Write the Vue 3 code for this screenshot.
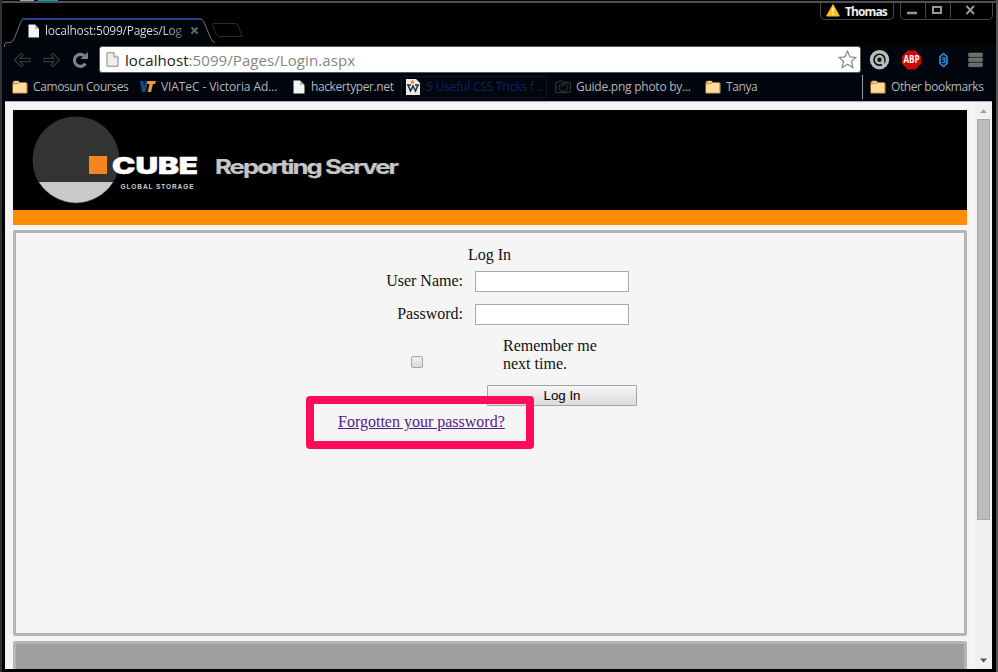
<script setup>
const bookmarks = [
  { label: 'Camosun Courses', icon: 'folder', cls: 'camosun' },
  { label: 'VIATeC - Victoria Ad...', icon: 'viatec', cls: 'viatec' },
  { label: 'hackertyper.net', icon: 'page', cls: 'hacker' },
  { label: '5 Useful CSS Tricks f...', icon: 'word', cls: 'tricks' },
  { label: 'Guide.png photo by...', icon: 'camera', cls: 'guide' },
  { label: 'Tanya', icon: 'folder', cls: 'tanya' },
  { label: 'Other bookmarks', icon: 'folder', cls: 'other' },
]
</script>

<template>
  <div class="window">
    <div class="edge-top"><i class="bit-a"></i><i class="bit-b"></i></div>
    <div class="titlebar">
      <div class="tab">
        <svg class="tab-shape" width="235" height="30" viewBox="0 0 235 30">
          <path d="M-5 29.500V25.500H0Q3 25 4.500 21L11 4Q12 2 15 2H190Q193 2 194.500 5L201 21Q202.500 25 205 25.500L206 30H-5Z" fill="#01040a" />
          <path d="M-5.500 30V28Q-5.500 25.500 -3 25.500H0Q3 25 4.500 21L11 4.500Q12 2 14 2H190Q192.500 2 194 5L200.500 21Q202 25 205 25.500" fill="none" stroke="#707070" />
          <path d="M12 2H191" stroke="#1c49b5" stroke-width="1.400" />
          <path d="M202.500 8Q202 6.500 204 6.500H225Q227.500 6.500 228.500 9L232 19.500H210Q207 19.500 206 17Z" fill="none" stroke="#2c2c2e" />
        </svg>
        <div class="tab-content">
          <svg class="tab-page" width="12" height="14" viewBox="0 0 12 14"><path d="M.5.5H7L11 5V13.500H.5Z" fill="#f4f4f4" /><path d="M7 .5V5H11Z" fill="#bbb" /></svg>
          <span class="tab-title">localhost:5099/Pages/Log</span>
          <svg class="tab-close" width="9" height="9" viewBox="0 0 9 9"><path d="M1.500 1.500L7.500 7.500M7.500 1.500L1.500 7.500" stroke="#66686a" stroke-width="2" /></svg>
        </div>
      </div>
      <div class="profile">
        <svg width="14" height="13" viewBox="0 0 14 13"><path d="M7 .7L13.300 12H.7Z" fill="#ffc21d" stroke="#ffc21d" stroke-linejoin="round" /><path d="M7 3.500V8M7 9.500V11" stroke="#fff" stroke-width="1.400" /></svg>
        <span>Thomas</span>
      </div>
      <div class="controls">
        <svg width="92" height="16" viewBox="0 0 92 16">
          <path d="M24.500 0V15M49.500 0V15" stroke="#484848" />
          <path d="M6 10H16" stroke="#999" stroke-width="2.500" />
          <rect x="32" y="4" width="8" height="6" fill="none" stroke="#999" stroke-width="2" />
          <path d="M65.500 3L73 11M73 3L65.500 11" stroke="#999" stroke-width="1.900" />
        </svg>
      </div>
    </div>

    <div class="toolbar">
      <svg class="nav" width="93" height="30" viewBox="0 0 93 30">
        <g fill="#050609" stroke="#35373a" stroke-width="1.200" stroke-linejoin="round">
          <path d="M12.500 15L19 8.300L21 10.200L18 13.300H28V16.700H18L21 19.800L19 21.700Z" />
          <path d="M57.500 15L51 8.300L49 10.200L52 13.300H42V16.700H52L49 19.800L51 21.700Z" />
        </g>
        <path d="M83.500 18.500A6 6 0 1 1 82.300 10.800" fill="none" stroke="#808080" stroke-width="3.200" />
        <path d="M86 7V14H78.500Z" fill="#808080" />
      </svg>
      <div class="omnibox">
        <svg class="url-page" width="13" height="15" viewBox="0 0 13 15"><path d="M1 .8H8L12 5V14.200H1Z" fill="#eee" stroke="#888" /><path d="M8 .8V5H12" fill="#fff" stroke="#888" /></svg>
        <span class="url"><b>localhost</b>:5099/Pages/Login.aspx</span>
        <svg class="star" width="19" height="19" viewBox="0 0 19 19"><path d="M9.500 1.200L12 6.900L18 7.400L13.500 11.300L14.900 17.500L9.500 14.300L4.100 17.500L5.500 11.300L1 7.400L7 6.900Z" fill="#fff" stroke="#858585" stroke-width="1.200" /></svg>
      </div>
      <svg class="extensions" width="125" height="30" viewBox="0 0 125 30">
        <circle cx="11.500" cy="14.700" r="8" fill="#101216" stroke="#bcbcbc" stroke-width="3.400" />
        <circle cx="11.500" cy="14.700" r="3.400" fill="none" stroke="#bcbcbc" stroke-width="2.400" />
        <path d="M15 14V20.500" stroke="#bcbcbc" stroke-width="2.400" />
        <path d="M39.700 5.500H47.300L53 11.200V18.800L47.300 24.500H39.700L34 18.800V11.200Z" fill="#cc0808" />
        <text x="35.500" y="18.400" textLength="16" lengthAdjust="spacingAndGlyphs" class="abp">ABP</text>
        <path d="M75.500 8.500L79 11.500V18.500L75.500 21.500L72 18.500V11.500Z" fill="#061525" stroke="#2b91e6" stroke-width="1.600" />
        <path d="M74 13H77L75.500 15H77V17.500H74" fill="none" stroke="#2b91e6" stroke-width="1.200" />
        <g fill="#6c6c6c" stroke="#8a8a8a" stroke-width=".5"><rect x="100.500" y="8" width="14" height="3.700" rx="1" /><rect x="100.500" y="13" width="14" height="3.700" rx="1" /><rect x="100.500" y="18" width="14" height="3.700" rx="1" /></g>
      </svg>
    </div>

    <div class="bookmarks">
      <div v-for="b in bookmarks" :key="b.label" class="bookmark" :class="b.cls">
        <svg v-if="b.icon === 'folder'" width="16" height="14" viewBox="0 0 16 14"><path d="M.5 2.500L2 .8H6.500L8 2.500H14.500Q15.500 2.500 15.500 4V12.500Q15.500 13.500 14.500 13.500H1.500Q.5 13.500 .5 12.500Z" fill="#d89f59" /><path d="M1 4.500L6.500 4L8 2.800H14V12.500H1Z" fill="#ffdc98" /><path d="M2.500 2H6.500" stroke="#fff2ce" /></svg>
        <svg v-else-if="b.icon === 'viatec'" width="16" height="14" viewBox="0 0 16 14"><path d="M0 1H3.500L4 7L5.500 1H8L5.500 12H2Z" fill="#164b86" /><path d="M7.500 1H16L15 4H13L11 12H7.700L9.500 4H7Z" fill="#ef982d" /></svg>
        <svg v-else-if="b.icon === 'page'" width="12" height="14" viewBox="0 0 12 14"><path d="M.5.5H7L11.500 5V13.500H.5Z" fill="#f4f4f4" /><path d="M7 .5V5H11.500Z" fill="#bbb" /></svg>
        <svg v-else-if="b.icon === 'word'" width="14" height="16" viewBox="0 0 14 16"><path d="M0 0H10L14 4V16H0Z" fill="#e5eceb" /><circle cx="6.500" cy="3" r="1.800" fill="#ed8830" /><path d="M2 6L4.500 12L7 7L9.500 12L12 6M1 6H5M9 6H13" fill="none" stroke="#252d31" stroke-width="1.500" /></svg>
        <svg v-else width="16" height="14" viewBox="0 0 16 14"><path d="M.5 2.500H3L4 1H8L9 2.500H15.500V12.500H.5Z" fill="#08090b" stroke="#303236" /><circle cx="8.500" cy="7.300" r="4.300" fill="none" stroke="#303236" /><path d="M6 7Q7 4 10 5" fill="none" stroke="#303236" /></svg>
        <span>{{ b.label }}</span>
      </div>
    </div>

    <div class="viewport">
      <main class="page">
        <header class="banner">
          <svg width="400" height="100" viewBox="0 0 400 100">
            <circle cx="63" cy="50" r="43.500" fill="#333" />
            <path d="M26 72H100A43.500 43.500 0 0 1 26 72Z" fill="#c9c9c9" />
            <rect x="76" y="46" width="18" height="18" fill="#f5861f" />
            <text x="99" y="64" textLength="86" lengthAdjust="spacingAndGlyphs" class="cube">CUBE</text>
            <text x="107.500" y="79" textLength="73" class="storage">GLOBAL STORAGE</text>
            <text x="202" y="64" textLength="182" lengthAdjust="spacingAndGlyphs" class="server">Reporting Server</text>
          </svg>
        </header>
        <section class="panel">
          <form class="login" @submit.prevent>
            <h1>Log In</h1>
            <label class="name" for="user">User Name:</label><input id="user" class="field" type="text" />
            <label class="name" for="password">Password:</label><input id="password" class="field" type="password" />
            <div class="check-cell"><input id="remember" class="check" type="checkbox" /></div>
            <label class="remember" for="remember">Remember me<br />next time.</label>
            <button type="submit">Log In</button>
            <div class="forgot"><a href="#">Forgotten your password?</a></div>
          </form>
        </section>
        <footer></footer>
      </main>
      <div class="scrollbar">
        <svg width="17" height="17" viewBox="0 0 17 17"><path d="M5 11L8.500 7.500L12 11Z" fill="#999" /></svg>
        <div class="thumb"></div>
        <svg class="down" width="17" height="17" viewBox="0 0 17 17"><path d="M5 6.500H12L8.500 10.500Z" fill="#505050" /></svg>
      </div>
    </div>
  </div>
</template>

<style>
body { margin: 0; overflow: hidden; background: #000; }
</style>

<style scoped>
* { box-sizing: border-box; }
svg { display: block; flex: none; }
.window { width: 998px; height: 672px; overflow: hidden; background: #000; border-left: 2px solid #303131; border-right: 2px solid #555; font-family: "Open Sans", "Noto Sans", sans-serif; }
.edge-top { height: 3px; display: flex; border-bottom: 2px solid #515154; background: #050511; }
.bit-a { width: 14px; height: 1px; margin-left: 18px; background: #aaa; }
.bit-b { width: 20px; height: 1px; margin-left: 4px; background: #00a6bd; }
.titlebar { height: 42px; display: flex; align-items: flex-start; }
.tab { display: grid; width: 244px; margin: 14px 0 0 8px; }
.tab-shape, .tab-content { grid-area: 1 / 1; }
.tab-shape { overflow: visible; }
.tab-content { display: flex; height: 27px; align-items: center; padding-left: 18px; }
.tab-page { margin-right: 5px; }
.tab-title { width: 137px; font-size: 12px; line-height: 20px; white-space: nowrap; letter-spacing: -.24px; background: linear-gradient(90deg, #e0e0e0 87%, #666 100%); background-clip: text; color: transparent; }
.tab-close { margin-left: 8px; }
.profile { width: 74px; height: 17px; margin-left: 566px; display: flex; align-items: flex-start; padding: 1px 0 0 5px; gap: 5px; border: 1px solid #464646; border-top: 0; border-radius: 0 0 5px 5px; color: #eee; font-size: 12px; font-weight: 600; line-height: 15px; letter-spacing: -.9px; letter-spacing: -.9px; }
.profile span { letter-spacing: -.9px; font-weight: 700; }
.controls { width: 93px; height: 17px; margin-left: 6px; border: 1px solid #464646; border-top: 0; border-radius: 0 0 5px 5px; overflow: hidden; }
.toolbar { height: 30px; display: flex; background: #01050d; }
.nav { margin: 0 4px 0 0; }
.omnibox { width: 762px; height: 27px; margin-top: 1px; display: flex; align-items: center; padding: 0 3px 0 6px; background: #fff; border: 1px solid #55585e; border-radius: 3px; }
.url { flex: 1; margin-left: 6px; color: #858585; font-size: 15px; line-height: 24px; letter-spacing: .08px; white-space: nowrap; }
.url b { color: #202020; font-weight: 400; }
.extensions { margin-left: 7px; }
.abp { font: 700 10px "Open Sans", sans-serif; fill: #fff; }
.bookmarks { height: 26px; padding-left: 10px; display: flex; background: #01050d; }
.bookmark { height: 24px; display: flex; flex: none; align-items: center; gap: 5px; color: #b3b6bb; font-size: 12px; line-height: 22px; white-space: nowrap; letter-spacing: -.4px; }
.camosun { width: 128px; }
.viatec { width: 153px; letter-spacing: -.1px; }
.hacker { width: 108px; gap: 6px; }
.tricks { width: 146px; height: 22px; margin-top: 1px; gap: 6px; padding-left: 4px; border: 1px solid #111721; border-radius: 2px; color: #082762; letter-spacing: -.2px; }
.guide { width: 150px; padding-left: 8px; letter-spacing: -.25px; }
.tanya { width: 165px; padding-left: 8px; }
.tanya span { letter-spacing: -.4px; }
.other { padding-left: 7px; border-left: 1px solid #9b9da2; }
.viewport { width: 987px; height: 568px; margin-left: 3px; display: flex; background: #f5f5f5; border-top: 1px solid #aaa; overflow: hidden; }
.page { width: 970px; padding: 8px 8px 0; }
.banner { height: 115px; border-bottom: 15px solid #ff8c00; background: #000; }
.cube { font: 900 23px Inter, sans-serif; fill: #fff; stroke: #fff; stroke-width: .5px; }
.storage { font: 700 6.500px "Liberation Sans", sans-serif; fill: #ccc; }
.server { font: 700 20px Inter, sans-serif; letter-spacing: -1.5px; fill: #c6c6c6; stroke: #c6c6c6; stroke-width: .2px; }
.panel { height: 406px; margin-top: 5px; border: 3px solid #b5b5b5; border-radius: 2px; }
footer { height: 60px; margin-top: 5px; border: 3px solid #b5b5b5; background: #9e9e9e; border-radius: 2px; }
.login { width: 270px; margin: 13px 0 0 355px; display: grid; grid-template-columns: 92px 178px; grid-template-rows: 20px 33px 35px 49px 28px 30px; font: 16px/18px "Liberation Serif", serif; color: #111; }
h1 { grid-column: 1 / 3; margin: 0 0 0 97px; font: inherit; }
.name { text-align: right; padding-top: 6px; }
.field { width: 154px; height: 21px; margin: 5px 0 0 12px; border: 1px solid #a9a9a9; background: #fff; }
.check-cell { padding: 22px 0 0 40px; }
.check { display: block; width: 12px; height: 12px; margin: 0; appearance: none; border: 1px solid #a4a4a4; border-radius: 2px; background: linear-gradient(#eee, #dcdcdc); }
.remember { margin-left: 40px; padding-top: 3px; }
button { grid-column: 2; width: 150px; height: 21px; margin: 2px 0 0 24px; padding: 0; border: 1px solid #a5a5a5; border-radius: 1px; background: linear-gradient(#f7f7f7, #dcdcdc); font: 13.333px/18px "Liberation Sans", sans-serif; color: #000; }
.forgot { grid-column: 1 / 3; z-index: 1; width: 228px; height: 53px; margin: -15px 0 0 -65px; padding: 9px 0 0 24px; border: 8px solid #ff0c58; border-radius: 4px; }
.forgot a { color: #551a8b; }
.scrollbar { width: 17px; display: flex; flex-direction: column; background: #f0f0f0; }
.thumb { width: 13px; height: 401px; margin-left: 2px; background: #bcbcbc; border: 1px solid #a7a7a7; }
.down { margin-top: auto; }
</style>
